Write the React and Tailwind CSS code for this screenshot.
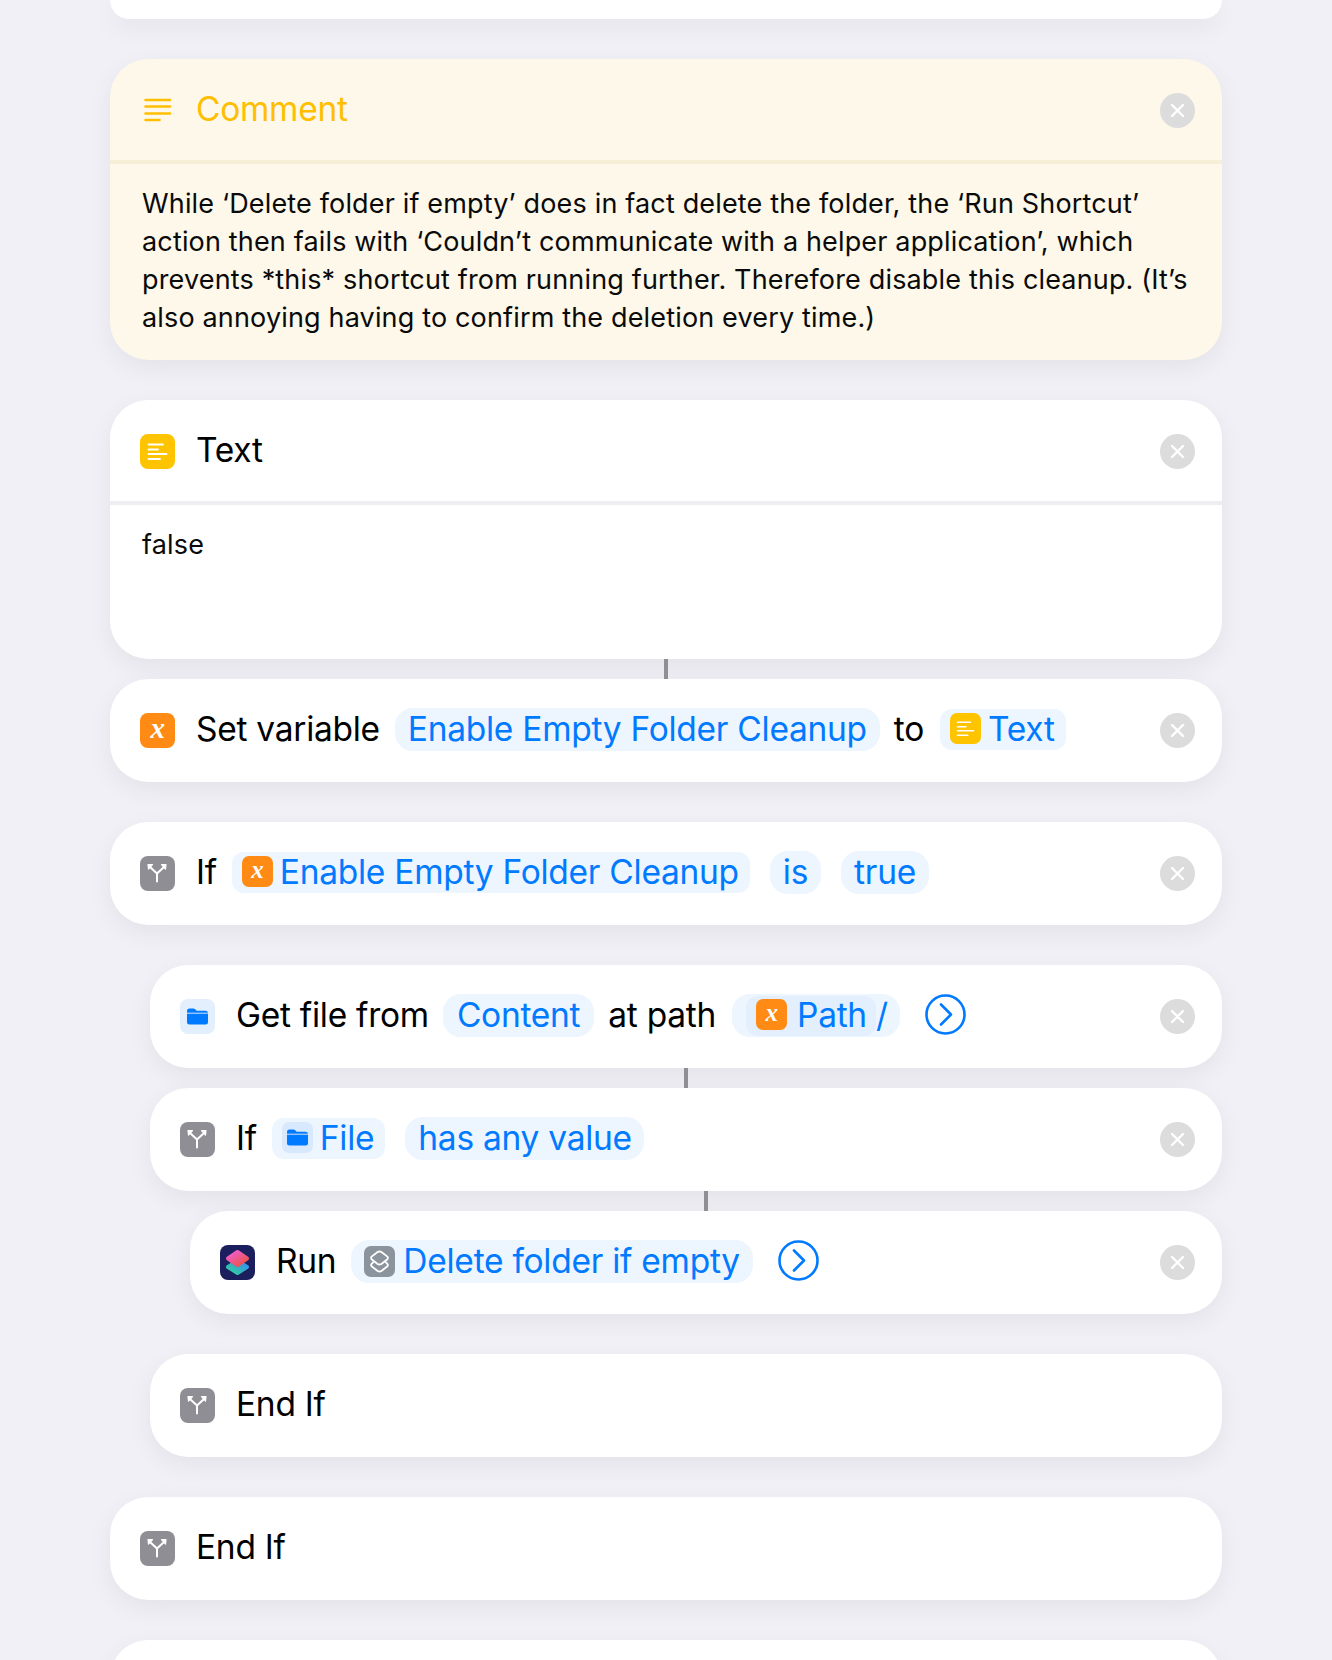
import React from "react";

const shadow = "shadow-[0_8px_26px_rgba(0,0,0,0.06)]";

function Close() {
  return (
    <div className="ml-auto flex h-[35px] w-[35px] shrink-0 items-center justify-center rounded-full bg-[#dcdcdd]">
      <svg width="15" height="15" viewBox="0 0 15 15" fill="none" stroke="#fff" strokeWidth="2.4" strokeLinecap="round">
        <path d="M2 2 L13 13 M13 2 L2 13" />
      </svg>
    </div>
  );
}

function Branch() {
  return (
    <div className="flex h-[35px] w-[35px] shrink-0 items-center justify-center rounded-[8px] bg-[#8f8e94]">
      <svg width="35" height="35" viewBox="0 0 35 35" fill="none" stroke="#fff" strokeWidth="2" strokeLinecap="round" strokeLinejoin="round">
        <path d="M17 25.5 V17.5 L10 11 M17 17.5 L24 11" />
        <path d="M8.5 13 L8 8.5 L12.5 8.5 Z M25.5 13 L26 8.5 L21.5 8.5 Z" fill="#fff" strokeWidth="1.2" />
      </svg>
    </div>
  );
}

function VarIcon({ small }) {
  return (
    <div className={`flex shrink-0 items-center justify-center bg-[#ff8a14] text-white ${small ? "h-[31px] w-[31px] rounded-[7px] text-[25px]" : "h-[35px] w-[35px] rounded-[8px] text-[29px]"} font-['Liberation_Serif',serif] font-bold italic leading-none`}>
      <span className="-translate-y-[2px]">x</span>
    </div>
  );
}

function TextIcon({ small }) {
  return (
    <div className={`flex shrink-0 items-center justify-center bg-[#ffc400] ${small ? "h-[31px] w-[31px] rounded-[7px]" : "h-[35px] w-[35px] rounded-[8px]"}`}>
      <svg width={small ? 19 : 21} height={small ? 17 : 19} viewBox="0 0 21 19" fill="none" stroke="#fff" strokeWidth="1.8" strokeLinecap="round">
        <path d="M1.5 2.5 H16 M1.5 7.5 H11 M1.5 12 H19.5 M1.5 17 H13" />
      </svg>
    </div>
  );
}

function Folder({ big }) {
  return (
    <div className={`flex shrink-0 items-center justify-center ${big ? "h-[35px] w-[35px] rounded-[8px] bg-[#e3effd]" : "h-[31px] w-[31px] rounded-[7px] bg-[#d9e9fd]"}`}>
      <svg width="21" height="17" viewBox="0 0 21 17" fill="#007aff">
        <path d="M0 3 Q0 0.5 2.5 0.5 H6.5 Q8 0.5 9 2 L9.6 2.8 H18.5 Q21 2.8 21 5.3 V14 Q21 16.5 18.5 16.5 H2.5 Q0 16.5 0 14 Z" />
        <path d="M0 5.2 H21" stroke="#e3effd" strokeWidth="0.9" />
      </svg>
    </div>
  );
}

function Shortcuts() {
  return (
    <div className="flex h-[35px] w-[35px] shrink-0 items-center justify-center rounded-[8px] bg-[#1c1f5e]">
      <svg width="27" height="29" viewBox="0 0 27 29">
        <defs>
          <linearGradient id="top" gradientUnits="userSpaceOnUse" x1="8" y1="3" x2="18" y2="19">
            <stop offset="0" stopColor="#ee5fd0" />
            <stop offset="1" stopColor="#ee5040" />
          </linearGradient>
          <linearGradient id="bot" gradientUnits="userSpaceOnUse" x1="18" y1="12" x2="9" y2="27">
            <stop offset="0" stopColor="#3a8cf2" />
            <stop offset="1" stopColor="#2fd09a" />
          </linearGradient>
        </defs>
        <polygon points="13.5,13 23,19 13.5,25 4,19" fill="url(#bot)" stroke="url(#bot)" strokeWidth="4" strokeLinejoin="round" />
        <polygon points="13.5,4 23,10.5 13.5,17 4,10.5" fill="url(#top)" stroke="url(#top)" strokeWidth="4" strokeLinejoin="round" />
      </svg>
    </div>
  );
}

function Layers() {
  return (
    <div className="flex h-[31px] w-[31px] shrink-0 items-center justify-center rounded-[7px] bg-[#8b939c]">
      <svg width="21" height="23" viewBox="0 0 21 23" fill="none" stroke="#fff" strokeWidth="1.8" strokeLinejoin="round">
        <path d="M4.5 12 L2.6 13.8 Q1.6 15 2.6 16.2 L8.6 21 Q10.5 22 12.4 21 L18.4 16.2 Q19.4 15 18.4 13.8 L16.5 12" />
        <path d="M8.6 2 Q10.5 1 12.4 2 L18.4 6.6 Q19.4 8 18.4 9.2 L12.4 14 Q10.5 15 8.6 14 L2.6 9.2 Q1.6 8 2.6 6.6 Z" />
      </svg>
    </div>
  );
}

function Chevron() {
  return (
    <svg width="41" height="41" viewBox="0 0 41 41" fill="none" stroke="#007aff" strokeWidth="2.6" strokeLinecap="round" strokeLinejoin="round" className="shrink-0 -translate-y-[1px]">
      <circle cx="20.5" cy="20.5" r="19" />
      <path d="M16 10.5 L26 20.5 L16 30.5" />
    </svg>
  );
}

function Pill({ children, className = "" }) {
  return (
    <span className={`flex h-[43px] shrink-0 items-center rounded-[18px] bg-[#edf5fe] px-[13px] text-[#007aff] ${className}`}>
      {children}
    </span>
  );
}

function TokenPill({ icon, children, className = "" }) {
  return (
    <span className={`flex h-[41px] shrink-0 items-center gap-[7px] rounded-[12px] bg-[#edf5fe] pl-[10px] pr-[11px] text-[#007aff] ${className}`}>
      <span className="-translate-y-[1px]">{icon}</span>
      {children}
    </span>
  );
}

function Row({ icon, children, close = true, indent = "" }) {
  return (
    <div className={`flex h-[103px] items-center rounded-[38px] bg-white pl-[30px] pr-[27px] text-[33.5px] leading-none tracking-[-0.27px] text-black ${shadow} ${indent}`}>
      {icon}
      <div className="ml-[21px] flex -translate-y-[1px] items-center whitespace-nowrap">{children}</div>
      {close && <Close />}
    </div>
  );
}

function Connector({ indent = "" }) {
  return (
    <div className={`flex h-5 justify-center ${indent}`}>
      <div className="h-5 w-1 bg-[#8e8e93]" />
    </div>
  );
}

export default function App() {
  return (
    <div className="h-[1660px] overflow-hidden bg-[#f0f0f6] pl-[110px] pr-[110px] [font-family:Inter,sans-serif]">
      <div className={`mb-10 h-[19px] rounded-b-[38px] bg-white ${shadow}`} />

      <div className={`mb-10 overflow-hidden rounded-[38px] bg-[#fdf8e9] ${shadow}`}>
        <div className="box-content flex h-[100px] items-center border-b-4 border-[#f7eed8] pl-[34px] pr-[27px] pt-px">
          <svg width="28" height="24" viewBox="0 0 28 24" fill="none" stroke="#ffbf00" strokeWidth="2.6" strokeLinecap="round" className="shrink-0">
            <path d="M1.5 2 H26 M1.5 8.5 H26 M1.5 15.5 H26 M1.5 22 H15.5" />
          </svg>
          <span className="ml-[24px] text-[33.5px] leading-none tracking-[-0.27px] text-[#ffbf00]">Comment</span>
          <Close />
        </div>
        <p className="pl-[32px] pr-[20px] pb-[23px] pt-[21px] text-[27px] leading-[38px] tracking-[0.16px] text-[#0a0a0a]">
          While ‘Delete folder if empty’ does in fact delete the folder, the ‘Run Shortcut’ action then fails with ‘Couldn’t communicate with a helper application’, which prevents *this* shortcut from running further. Therefore disable this cleanup. (It’s also annoying having to confirm the deletion every time.)
        </p>
      </div>

      <div className={`overflow-hidden rounded-[38px] bg-white ${shadow}`}>
        <div className="box-content flex h-[100px] items-center border-b-4 border-[#eeeef2] pl-[30px] pr-[27px] pt-px">
          <TextIcon />
          <span className="ml-[21px] text-[33.5px] leading-none tracking-[-0.27px] text-black">Text</span>
          <Close />
        </div>
        <p className="h-[154px] px-[32px] pt-[21px] text-[27px] leading-[38px] tracking-[0.16px] text-[#0a0a0a]">false</p>
      </div>
      <Connector />

      <Row icon={<VarIcon />}>
        <span>Set variable</span>
        <Pill className="ml-[15px]">Enable Empty Folder Cleanup</Pill>
        <span className="ml-[14px]">to</span>
        <TokenPill icon={<TextIcon small />} className="ml-[16px]">Text</TokenPill>
      </Row>

      <div className="h-10" />
      <Row icon={<Branch />}>
        <span>If</span>
        <TokenPill icon={<VarIcon small />} className="ml-[15px]">Enable Empty Folder Cleanup</TokenPill>
        <Pill className="ml-[20px]">is</Pill>
        <Pill className="ml-[20px]">true</Pill>
      </Row>

      <div className="h-10" />
      <Row icon={<Folder big />} indent="ml-10">
        <span>Get file from</span>
        <Pill className="ml-[14px] px-[14px]">Content</Pill>
        <span className="ml-[14px]">at path</span>
        <span className="ml-[16px] flex h-[43px] shrink-0 items-center rounded-[18px] bg-[#edf5fe] pl-[14px] pr-[12px] text-[#007aff]">
          <span className="flex h-[40px] items-center gap-[10px] rounded-[12px] bg-[#e3effd] pl-[10px] pr-[9px]">
            <span className="-translate-y-[1px]"><VarIcon small /></span>
            Path
          </span>
          <span>/</span>
        </span>
        <span className="ml-[25px] flex"><Chevron /></span>
      </Row>
      <Connector indent="ml-10" />

      <Row icon={<Branch />} indent="ml-10">
        <span>If</span>
        <TokenPill icon={<Folder />} className="ml-[15px] pr-[10px]">File</TokenPill>
        <Pill className="ml-[20px] pr-[12px]">has any value</Pill>
      </Row>
      <Connector indent="ml-20" />

      <Row icon={<Shortcuts />} indent="ml-20">
        <span>Run</span>
        <Pill className="ml-[15px]">
          <Layers />
          <span className="ml-[8px]">Delete folder if empty</span>
        </Pill>
        <span className="ml-[25px] flex"><Chevron /></span>
      </Row>

      <div className="h-10" />
      <Row icon={<Branch />} close={false} indent="ml-10">
        <span>End If</span>
      </Row>

      <div className="h-10" />
      <Row icon={<Branch />} close={false}>
        <span>End If</span>
      </Row>

      <div className="h-10" />
      <div className={`h-[60px] rounded-t-[38px] bg-white ${shadow}`} />
    </div>
  );
}
